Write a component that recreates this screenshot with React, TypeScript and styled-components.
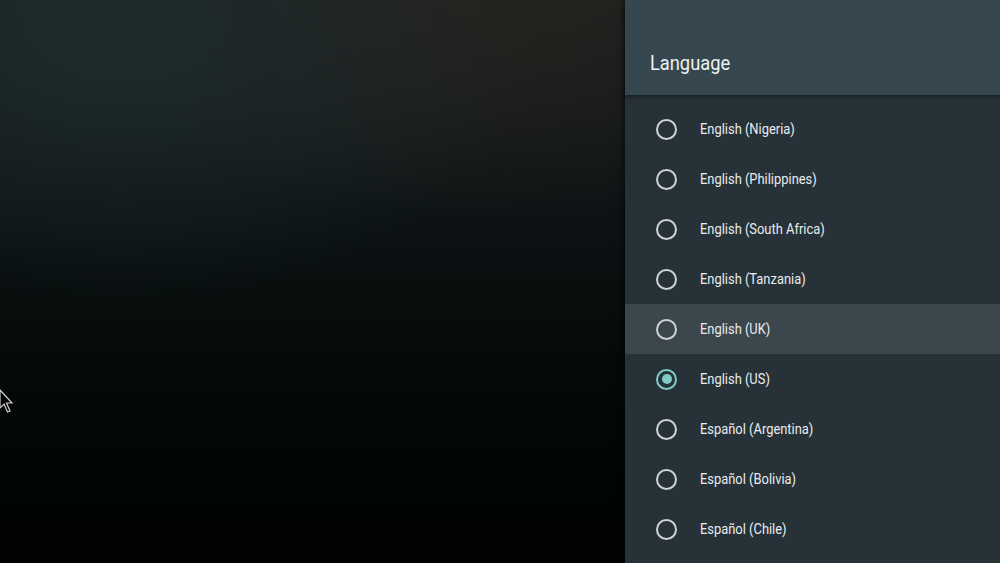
import React from "react";
import styled, { createGlobalStyle } from "styled-components";

const Global = createGlobalStyle`
  html, body { margin: 0; padding: 0; background: #000; }
  body { font-family: Roboto, "Noto Sans", sans-serif; }
`;

const Screen = styled.div`
  width: 1000px;
  height: 563px;
  display: flex;
  overflow: hidden;
  position: relative;
  background:
    radial-gradient(ellipse 420px 260px at 120px 40px, rgba(30, 44, 46, 0.9), rgba(30, 44, 46, 0) 100%),
    radial-gradient(ellipse 380px 220px at 470px 0px, rgba(38, 34, 30, 0.9), rgba(38, 34, 30, 0) 100%),
    linear-gradient(180deg, #1c2121 0%, #0e1415 35%, #040909 65%, #010202 100%);
`;

const Stage = styled.div`
  flex: 1;
  position: relative;
`;

const Cursor = styled.svg`
  position: absolute;
  left: -1px;
  top: 389px;
`;

const Panel = styled.aside`
  width: 375px;
  height: 563px;
  background: #263238;
  display: flex;
  flex-direction: column;
  box-shadow: -2px 0 6px rgba(0, 0, 0, 0.5);
`;

const Header = styled.header`
  height: 95px;
  flex: 0 0 95px;
  background: #37474f;
  display: flex;
  align-items: flex-end;
  padding: 0 0 20px 25px;
  box-sizing: border-box;
  box-shadow: 0 2px 3px rgba(0, 0, 0, 0.35);
  position: relative;
  z-index: 1;
`;

const Title = styled.h1`
  margin: 0;
  display: inline-block;
  font-family: Roboto, sans-serif;
  font-weight: 400;
  font-size: 21px;
  color: #eef1f2;
  transform: scaleX(0.87);
  transform-origin: left center;
`;

const List = styled.ul`
  list-style: none;
  margin: 0;
  padding: 9px 0 0;
  display: flex;
  flex-direction: column;
`;

const Row = styled.li<{ $focused?: boolean }>`
  height: 50px;
  display: flex;
  align-items: center;
  padding-left: 31px;
  background: ${(p) => (p.$focused ? "#3c474d" : "transparent")};
`;

const Radio = styled.span<{ $checked?: boolean }>`
  width: 21px;
  height: 21px;
  box-sizing: border-box;
  border-radius: 50%;
  border: 2px solid ${(p) => (p.$checked ? "#80cbc4" : "#cfd3d5")};
  display: flex;
  align-items: center;
  justify-content: center;
  flex: 0 0 21px;
  &::after {
    content: "";
    width: 10px;
    height: 10px;
    border-radius: 50%;
    background: #80cbc4;
    display: ${(p) => (p.$checked ? "block" : "none")};
  }
`;

const Label = styled.span`
  display: inline-block;
  margin-left: 23px;
  font-family: Roboto, sans-serif;
  font-size: 15px;
  color: #e9ecee;
  white-space: nowrap;
  transform: scaleX(0.86);
  transform-origin: left center;
`;

const items = [
  "English (Nigeria)",
  "English (Philippines)",
  "English (South Africa)",
  "English (Tanzania)",
  "English (UK)",
  "English (US)",
  "Español (Argentina)",
  "Español (Bolivia)",
  "Español (Chile)",
];

export default function App() {
  return (
    <>
      <Global />
      <Screen>
        <Stage>
          <Cursor width="16" height="26" viewBox="0 0 16 26">
            <path d="M1 1 L1 19 L5 15 L8.5 23 L11 22 L7.5 14 L13 14 Z" fill="#000" stroke="#cfcfcf" strokeWidth="1.2" />
          </Cursor>
        </Stage>
        <Panel>
          <Header>
            <Title>Language</Title>
          </Header>
          <List>
            {items.map((it) => (
              <Row key={it} $focused={it === "English (UK)"}>
                <Radio $checked={it === "English (US)"} />
                <Label>{it}</Label>
              </Row>
            ))}
          </List>
        </Panel>
      </Screen>
    </>
  );
}
